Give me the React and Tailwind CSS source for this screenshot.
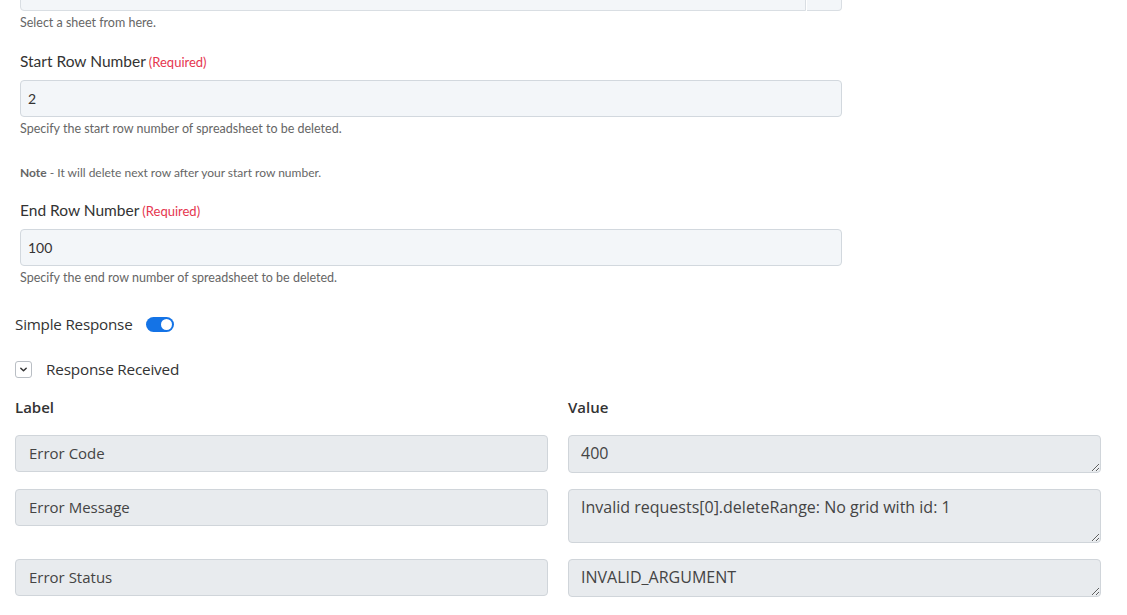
import { useState } from "react";

const responseRows = [
  { label: "Error Code", value: "400", rows: 1 },
  { label: "Error Message", value: "Invalid requests[0].deleteRange: No grid with id: 1", rows: 2 },
  { label: "Error Status", value: "INVALID_ARGUMENT", rows: 1 },
];

function FieldLabel({ children }) {
  return (
    <label className="block text-[15.5px] text-[#333] mb-[8px] leading-[20px]">
      {children}
      <span className="text-[13px] text-[#e5364e] ml-[3px]">(Required)</span>
    </label>
  );
}

function Help({ children }) {
  return <p className="text-[12.5px] text-[#666] mt-[4px] leading-[16px]">{children}</p>;
}

export default function App() {
  const [simple, setSimple] = useState(true);
  const [open, setOpen] = useState(true);

  return (
    <div className="w-[1127px] h-[615px] overflow-hidden bg-white">
      {/* sheet picker + row range */}
      <div className="pl-[20px] w-[842px] font-['Lato',sans-serif]">
        <div className="flex -mt-[26px] h-[37px]">
          <div className="flex-1 bg-[#f3f6f9] border border-[#d9dee3] rounded-l-[4px] px-[8px] flex items-center text-[14px] text-[#333]">
            Form Entry
          </div>
          <div className="w-[35px] bg-[#f3f6f9] border border-[#d9dee3] border-l-0 rounded-r-[4px] ml-[1px]" />
        </div>
        <Help>Select a sheet from here.</Help>

        <div className="mt-[20px]">
          <FieldLabel>Start Row Number</FieldLabel>
          <input
            readOnly
            value="2"
            className="w-full h-[37px] bg-[#f3f6f9] border border-[#d2d8de] rounded-[4px] px-[7px] text-[14px] text-[#333] outline-none"
          />
          <Help>Specify the start row number of spreadsheet to be deleted.</Help>
        </div>

        <p className="text-[12px] text-[#666] mt-[28px] leading-[16px]">
          <span className="font-bold">Note</span> - It will delete next row after your start row number.
        </p>

        <div className="mt-[19px]">
          <FieldLabel>End Row Number</FieldLabel>
          <input
            readOnly
            value="100"
            className="w-full h-[37px] bg-[#f3f6f9] border border-[#d2d8de] rounded-[4px] px-[7px] text-[14px] text-[#333] outline-none"
          />
          <Help>Specify the end row number of spreadsheet to be deleted.</Help>
        </div>
      </div>

      {/* response mapping */}
      <div className="px-[15px] w-[1116px] font-['Open_Sans',sans-serif] text-[#333]">
        <div className="flex items-center mt-[28px] h-[20px]">
          <span className="text-[15.2px] tracking-[-0.2px]">Simple Response</span>
          <button
            onClick={() => setSimple(!simple)}
            className={`ml-[14px] w-[28px] h-[15px] rounded-full flex items-center px-[2px] ${
              simple ? "bg-[#1473e6] justify-end" : "bg-[#ccc] justify-start"
            }`}
          >
            <span className="w-[11px] h-[11px] rounded-full bg-white" />
          </button>
        </div>

        <div className="flex items-center mt-[25px] h-[20px]">
          <button
            onClick={() => setOpen(!open)}
            className="w-[17px] h-[17px] border border-[#b9bec4] rounded-[3px] flex items-center justify-center"
          >
            <svg width="9" height="9" viewBox="0 0 10 10" fill="none">
              <path d="M2 3.5 L5 6.5 L8 3.5" stroke="#333" strokeWidth="1.6" strokeLinecap="round" strokeLinejoin="round" />
            </svg>
          </button>
          <span className="ml-[14px] text-[15.3px] tracking-[-0.2px]">Response Received</span>
        </div>

        {open && (
          <div className="grid grid-cols-2 gap-x-[20px] mt-[18px]">
            <div className="text-[15px] font-semibold leading-[20px]">Label</div>
            <div className="text-[15px] font-semibold leading-[20px]">Value</div>
            {responseRows.map((r, i) => (
              <div key={r.label} className="contents">
                <div className={i === 0 ? "mt-[18px]" : "mt-[16px]"}>
                  <div className="h-[37px] bg-[#e8ebee] border border-[#d0d5da] rounded-[4px] px-[13px] flex items-center text-[15px] text-[#444]">
                    {r.label}
                  </div>
                </div>
                <div className={i === 0 ? "mt-[18px]" : "mt-[16px]"}>
                  <textarea
                    readOnly
                    value={r.value}
                    className={`block w-full bg-[#e8ebee] border border-[#d0d5da] rounded-[4px] px-[12px] pt-[6px] text-[16px] text-[#444] outline-none leading-[22px] ${
                      r.rows === 2 ? "h-[54px]" : "h-[38px]"
                    }`}
                  />
                </div>
              </div>
            ))}
          </div>
        )}
      </div>
    </div>
  );
}
